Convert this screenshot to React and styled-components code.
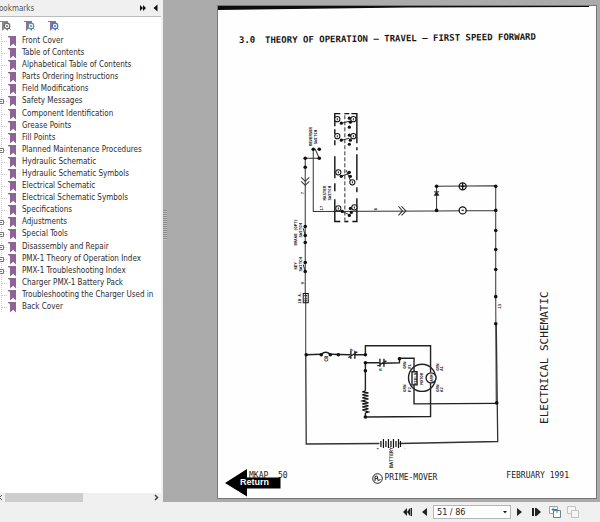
import React, { useState } from "react";
import styled, { createGlobalStyle } from "styled-components";

const GlobalStyle = createGlobalStyle`
    * {
        box-sizing: border-box;
    }

    body {
        margin: 0;
        background-color: #f0f0f0;
        font-family: "DejaVu Sans Condensed", "DejaVu Sans", sans-serif;
        font-size: 8px;
        color: #222;
    }

    button {
        display: flex;
        padding: 0;
        border: none;
        background: none;
        cursor: pointer;
    }

    svg {
        display: block;
    }
`;

const Window = styled.div`
    display: flex;
    flex-direction: column;
    min-height: 100vh;
    border-bottom: 1px solid #6d7275;
`;

const Main = styled.main`
    display: flex;
    flex: 1;
`;

const Sidebar = styled.aside`
    display: flex;
    flex-direction: column;
    width: 163px;
    flex-shrink: 0;
    overflow: hidden;
    background-color: #fff;
    border-right: 2px solid #f0f0f0;
`;

const SidebarHeader = styled.header`
    display: flex;
    align-items: center;
    gap: 7px;
    height: 17px;
    padding-right: 3px;
    background-color: #f0f0f0;
    border-bottom: 1px solid #bcbcbc;
`;

const SidebarTitle = styled.h2`
    flex: 1;
    margin: 0 0 0 -6px;
    font-size: 8px;
    font-weight: normal;
    color: #555;
`;

const SidebarTools = styled.div`
    display: flex;
    align-items: center;
    gap: 11px;
    height: 18px;
`;

const Tree = styled.ul`
    display: grid;
    grid-auto-rows: 1fr;
    height: 278px;
    margin: 0;
    padding: 0;
    list-style: none;
`;

const TreeRow = styled.li`
    display: flex;
    align-items: center;
    white-space: nowrap;
`;

const TreeLink = styled.a`
    display: flex;
    align-items: center;
    gap: 5px;
    line-height: 12px;
    color: #2c2c2c;
    text-decoration: none;
`;

const ScrollBar = styled.div`
    display: flex;
    align-items: center;
    justify-content: space-between;
    height: 9px;
    margin-top: auto;
    padding-right: 2px;
    background-color: #f0f0f0;
`;

const ScrollThumb = styled.div`
    width: 78px;
    height: 9px;
    margin-right: auto;
    margin-left: 2px;
    background-color: #cdcdcd;
`;

const Splitter = styled.div`
    display: flex;
    align-items: center;
    width: 5px;
    background-color: #ababab;
`;

const Grip = styled.div`
    width: 4px;
    height: 30px;
    margin-bottom: 52px;
    background: repeating-linear-gradient(#8d8d8d 0 1px, #bdbdbd 1px 2px);
`;

const Viewer = styled.section`
    flex: 1;
    min-width: 0;
    padding: 5px 3px 3px 49px;
    background-color: #ababab;
`;

const Page = styled.article`
    background-color: #fefefe;
    border: 1px solid #777;
    font-family: "DejaVu Sans Mono", monospace;
    color: #222;
`;

const PageTitle = styled.h1`
    display: flex;
    gap: 10px;
    margin: 0;
    padding: 22px 0 8px 21px;
    font-size: 9px;
    line-height: 16px;
    color: #161616;
    white-space: nowrap;

    span {
        transform: rotate(-0.7deg);
        transform-origin: left;
    }
`;

const PageFooter = styled.footer`
    position: relative;
    display: flex;
    justify-content: space-between;
    height: 29px;
    padding: 0 27px 0 31px;
    line-height: 14px;
    white-space: pre;
`;

const Brand = styled.div`
    display: flex;
    align-items: center;
    gap: 1px;
    height: 18px;
    margin-left: 16px;
`;

const ReturnLink = styled.a`
    position: absolute;
    left: 7px;
    top: 0;
    display: block;
    width: 56px;
`;

const NavBar = styled.nav`
    display: flex;
    align-items: center;
    justify-content: flex-end;
    height: 20px;
    padding-right: 19px;
    background-color: #f0f0f0;
`;

const NavButton = styled.button`
    justify-content: center;
    width: ${({ $width }) => $width || 17}px;
`;

const SelectBox = styled.label`
    display: flex;
    align-items: center;
    width: 78px;
    height: 14px;
    padding-right: 3px;
    border: 1px solid #b5b5b5;
    background-color: #fff;
`;

const PageSelect = styled.select`
    flex: 1;
    min-width: 0;
    padding: 0 3px;
    border: none;
    background: none;
    appearance: none;
    font-family: inherit;
    font-size: 9px;
    line-height: 12px;
    color: #222;
`;

const bookmarks = [
    { title: "Front Cover" },
    { title: "Table of Contents" },
    { title: "Alphabetical Table of Contents" },
    { title: "Parts Ordering Instructions" },
    { title: "Field Modifications" },
    { title: "Safety Messages", open: true },
    { title: "Component Identification" },
    { title: "Grease Points" },
    { title: "Fill Points" },
    { title: "Planned Maintenance Procedures", open: true },
    { title: "Hydraulic Schematic" },
    { title: "Hydraulic Schematic Symbols" },
    { title: "Electrical Schematic" },
    { title: "Electrical Schematic Symbols" },
    { title: "Specifications" },
    { title: "Adjustments", open: true },
    { title: "Special Tools", open: true },
    { title: "Disassembly and Repair", open: true },
    { title: "PMX-1 Theory of Operation Index", open: true },
    { title: "PMX-1 Troubleshooting Index", open: true },
    { title: "Charger PMX-1 Battery Pack" },
    { title: "Troubleshooting the Charger Used in" },
    { title: "Back Cover" },
];

const BookmarkIcon = ({ open }) => (
    <svg width="17" height="12" viewBox="0 0 17 12">
        <path d="M1.5 0V12M2 6.5H8" stroke="#c9c9c9" strokeDasharray="1 1" fill="none" />
        {open && <path d="M-1 4.5H3.5V8.5H-1M-1 6.5H2" stroke="#777" fill="#fff" />}
        <path d="M8 1H16V11.5L13.2 8.8L10 11.5V3.5Q10 2 8 2Z" fill="#8c6596" />
    </svg>
);

const ToolIcon = ({ flag, ring }) => (
    <svg width="13" height="12" viewBox="0 0 13 12">
        <path d="M0 1H8V11L5 8L2 11V2H0Z" fill={flag} />
        <circle cx="7" cy="6" r="2.8" fill="#eef5f5" stroke={ring} strokeWidth="1.2" />
        <path d="M7 5V7M6 6H8M9 8L10.5 9.5" stroke={ring} />
    </svg>
);

const Dots = ({ points, r = 1.8 }) =>
    points.map(([x, y]) => <circle key={x + "-" + y} cx={x} cy={y} r={r} fill="#111" />);

// text that reads from bottom to top
const Label = ({ x, y, size = 4, children }) => (
    <text transform={`translate(${x} ${y}) rotate(-90)`} fontSize={size} fontWeight="bold">
        {children}
    </text>
);

const Schematic = () => (
    <svg
        width="100%"
        viewBox="218 56 377 412"
        fill="none"
        stroke="#333"
        fontFamily="DejaVu Sans Mono, monospace"
        role="img"
        aria-label="Electrical schematic"
    >
        {/* left rail */}
        <path d="M305 158V293M305.5 302V353" />
        <path d="M305.5 353L306 443L379 442.5M399 442.5L497 440.5L495.5 323" strokeWidth="1.3" />
        <path d="M305 158H319L315 149H313V211L436 210.5" />
        <path d="M301 177L305 181L309 177M301 181L305 185L309 181" />
        <path d="M303 228L305 235M303 264L305 271" />
        <path d="M303 293H308V302H303ZM305.5 293V302" stroke="#111" />
        <path d="M304 295H307M304 298H307M304 300H307" />

        {/* master switch */}
        <path d="M344.5 115V220" strokeDasharray="4 2" />
        <path
            d="M334.5 126V113.5H340M344 113.5H349M351 113.5H356.5V143M334.5 129V134M334.5 140V145M334.5 156V178M334.5 183V191M334.5 199V221H340M344 221H348M352 221H356.5V198M356.5 192V187M356.5 180V154M356.5 150V147"
            stroke="#111"
            strokeWidth="1.4"
        />
        <path d="M341 123L349 121M341 140L349 138M341 176L349 173M342 211L350 215M346 170L350 180" />
        {[[337, 119], [353, 119], [337, 136], [353, 136], [338, 172], [352, 182], [338, 208], [354, 207]].map(([x, y]) => (
            <g key={x + "-" + y} stroke="#111">
                <circle cx={x} cy={y} r="2.6" fill="#fff" />
                <path d={`M${x} ${y - 1}V${y + 1}`} />
            </g>
        ))}

        {/* coil branch */}
        <path d="M398 206L402 210.5L398 215M401 206L405.5 210.5L401 215" />
        <path d="M436 210.5V186L495 185.5M436 210.5L495 210M495 185.5V296L495.5 402" />
        <path d="M434 195H438L436 191ZM433.5 191.5H438.5" fill="#111" />
        <g stroke="#111" strokeWidth="1.3">
            <circle cx="462" cy="186" r="3.5" />
            <path d="M460 186H464M462 183V189" />
            <circle cx="462" cy="210" r="3.5" fill="#fff" />
            <path d="M461 210H463" />
        </g>

        {/* motor circuit */}
        <g strokeWidth="1.4" stroke="#222">
            <path d="M306 354L321 353.5M330 353.5L350 354M354 354H365V345L430 345V372M430 382V415.5L365 416V412M365 390V362H379M383 362.5L399 362V357.5H413.5V371M413.5 384V403L496 402.5" />
            <path d="M321 353.5Q325.5 349.5 330 353.5M350.5 350V358M354.5 350V358M348 357L357 351M379.5 358V366M383.5 358V366M377 365L386 360" />
            <path d="M365 390L362 391L368 392L362 394L368 395L362 397L368 398L362 400L368 402L362 403L368 405L362 406L368 408L362 409L368 411L365 412" stroke="#111" />
            <circle cx="421.5" cy="377" r="13.5" />
            <circle cx="430.5" cy="377" r="5" fill="#fff" />
            <path d="M411.5 371H416.5V384H411.5Z" />
        </g>

        {/* battery */}
        <path
            d="M380.5 440V446M383 438V447M385.5 440V446M388 438V447M390.5 440V446M393 438V447M395.5 440V446M398 438V447M400 440V446"
            stroke="#111"
            strokeWidth="1.2"
        />

        <g stroke="none">
            <Dots
                points={[
                    [305, 158], [305, 167], [313, 149], [319, 149], [319, 158], [305, 226], [305, 235], [305, 242],
                    [305, 262], [305, 271], [306, 354], [321, 354], [330, 354], [338, 354], [365, 354], [365, 362],
                    [365, 370], [365, 416], [399, 358], [436, 186], [436, 210], [495, 186], [495, 210], [495, 230],
                    [495, 249], [495, 269], [495, 296], [495, 323], [496, 402],
                ]}
            />
            <Dots
                r={1.6}
                points={[
                    [341, 123], [349, 118], [350, 122], [349, 127], [341, 140], [349, 135], [350, 140], [349, 144],
                    [341, 176], [349, 172], [350, 176], [342, 211], [350, 208], [351, 212], [349, 215],
                ]}
            />
        </g>

        <g stroke="none" fill="#222">
            <Label x={312} y={146}>REVERSER</Label>
            <Label x={317} y={144}>SWITCH</Label>
            <Label x={326} y={200}>MASTER</Label>
            <Label x={331} y={200}>SWITCH</Label>
            <Label x={304} y={194}>7</Label>
            <Label x={323} y={210}>17</Label>
            <Label x={377} y={210}>8</Label>
            <Label x={297} y={245}>BRAKE (OPT)</Label>
            <Label x={302} y={237}>SWITCH</Label>
            <Label x={297} y={269}>KEY</Label>
            <Label x={302} y={271}>SWITCH</Label>
            <Label x={304} y={284}>9</Label>
            <Label x={301} y={303}>10 A.</Label>
            <Label x={500} y={308}>13</Label>
            <Label x={328} y={361} size={5}>CB</Label>
            <Label x={353} y={350}>F</Label>
            <Label x={382} y={370}>R</Label>
            <Label x={416} y={384}>FIELD</Label>
            <Label x={422} y={384}>MOTOR</Label>
            <Label x={432} y={381}>ARM</Label>
            <Label x={406} y={368}>GRN</Label>
            <Label x={410} y={368}>F1</Label>
            <Label x={406} y={391}>GRN</Label>
            <Label x={410} y={391}>F2</Label>
            <Label x={438} y={370}>GRN</Label>
            <Label x={442} y={370}>A1</Label>
            <Label x={438} y={391}>GRN</Label>
            <Label x={442} y={391}>A2</Label>
            <Label x={393} y={467} size={5}>BATTERY</Label>
            <text x="376" y="449" fontSize="4">+</text>
            <text x="403" y="449" fontSize="4">-</text>
            <text transform="translate(547 423) rotate(-90)" fontSize="11">
                ELECTRICAL SCHEMATIC
            </text>
        </g>
    </svg>
);

const App = () => {
    const [page, setPage] = useState(51);

    return (
        <Window>
            <GlobalStyle />
            <Main>
                <Sidebar>
                    <SidebarHeader>
                        <SidebarTitle>Bookmarks</SidebarTitle>
                        <button aria-label="Expand panel">
                            <svg width="6" height="6" viewBox="0 0 6 6">
                                <path d="M0 0L3 3L0 6ZM3 0L6 3L3 6Z" fill="#111" />
                            </svg>
                        </button>
                        <button aria-label="Collapse panel">
                            <svg width="5" height="8" viewBox="0 0 5 8">
                                <path d="M4.5 0.5V7.5L0.5 4Z" fill="#111" />
                            </svg>
                        </button>
                    </SidebarHeader>
                    <SidebarTools>
                        <button aria-label="Go to bookmark">
                            <ToolIcon flag="#8a8a8a" ring="#6c6c6c" />
                        </button>
                        <button aria-label="Add bookmark">
                            <ToolIcon flag="#946ba3" ring="#4c9a9b" />
                        </button>
                        <button aria-label="Bookmark settings">
                            <ToolIcon flag="#946ba3" ring="#4476c4" />
                        </button>
                    </SidebarTools>
                    <Tree>
                        {bookmarks.map((item) => (
                            <TreeRow key={item.title}>
                                <TreeLink href="#page">
                                    <BookmarkIcon open={item.open} />
                                    {item.title}
                                </TreeLink>
                            </TreeRow>
                        ))}
                    </Tree>
                    <ScrollBar>
                        <svg width="3" height="7" viewBox="0 0 3 7">
                            <path d="M2 1L-0.5 3.5L2 6" stroke="#555" fill="none" />
                        </svg>
                        <ScrollThumb />
                        <svg width="5" height="7" viewBox="0 0 5 7">
                            <path d="M1 1L3.5 3.5L1 6" stroke="#444" strokeWidth="1.5" fill="none" />
                        </svg>
                    </ScrollBar>
                </Sidebar>
                <Splitter>
                    <Grip />
                </Splitter>
                <Viewer>
                    <Page id="page">
                        <svg width="100%" height="4" viewBox="0 0 377 4" preserveAspectRatio="none">
                            <path d="M0 0H370V1L190 1.5L0 4Z" fill="#0c0c0c" />
                        </svg>
                        <PageTitle>
                            <span>3.0</span>
                            <span>THEORY OF OPERATION – TRAVEL – FIRST SPEED FORWARD</span>
                        </PageTitle>
                        <Schematic />
                        <PageFooter>
                            <span>MKAP  50</span>
                            <Brand>
                                <svg width="11" height="11" viewBox="0 0 11 11">
                                    <circle cx="5.5" cy="5.5" r="4.8" fill="none" stroke="#222" />
                                    <path d="M3 8V3.5Q6 2 5.5 5L3 6M5.5 5L6 7.5L8.5 6.5" fill="none" stroke="#222" />
                                </svg>
                                PRIME-MOVER
                            </Brand>
                            <span>FEBRUARY 1991</span>
                            <ReturnLink href="#page">
                                <svg width="56" height="28" viewBox="0 0 56 28">
                                    <path d="M0 14L22 0V8.5H55.5V19.5H22V27.5Z" fill="#000" />
                                    <text
                                        x="15"
                                        y="16"
                                        fill="#fff"
                                        fontFamily="Liberation Sans, sans-serif"
                                        fontSize="9"
                                        fontWeight="bold"
                                    >
                                        Return
                                    </text>
                                </svg>
                            </ReturnLink>
                        </PageFooter>
                    </Page>
                </Viewer>
            </Main>
            <NavBar>
                <NavButton aria-label="First page">
                    <svg width="9" height="8" viewBox="0 0 9 8">
                        <path d="M4 0V8L0 4ZM7 0V8L4 4ZM7.5 0H9V8H7.5Z" fill="#222" />
                    </svg>
                </NavButton>
                <NavButton aria-label="Previous page">
                    <svg width="5" height="8" viewBox="0 0 5 8">
                        <path d="M5 0V8L0 4Z" fill="#222" />
                    </svg>
                </NavButton>
                <SelectBox>
                    <PageSelect
                        aria-label="Page"
                        value={page}
                        onChange={(e) => setPage(Number(e.target.value))}
                    >
                        {Array.from({ length: 86 }, (_, i) => (
                            <option key={i} value={i + 1}>
                                {i + 1} / 86
                            </option>
                        ))}
                    </PageSelect>
                    <svg width="4" height="3" viewBox="0 0 4 3">
                        <path d="M0 0H4L2 2.5Z" fill="#222" />
                    </svg>
                </SelectBox>
                <NavButton aria-label="Next page">
                    <svg width="5" height="8" viewBox="0 0 5 8">
                        <path d="M0 0V8L5 4Z" fill="#222" />
                    </svg>
                </NavButton>
                <NavButton aria-label="Last page">
                    <svg width="9" height="8" viewBox="0 0 9 8">
                        <path d="M0 0H2V8H0ZM3 0H4.5L9 4L4.5 8H3Z" fill="#222" />
                    </svg>
                </NavButton>
                <NavButton aria-label="Previous view" $width={19}>
                    <svg width="12" height="12" viewBox="0 0 12 12" fill="none">
                        <path d="M0.5 0.5H8.5V7.5H0.5Z" stroke="#9aa4ad" fill="#fff" />
                        <path d="M4.5 4.5H11.5V11.5H4.5Z" stroke="#70808c" fill="#fff" />
                        <path d="M8 7V3.5H3M5 1.5L3 3.5L5 5.5" stroke="#278c91" />
                    </svg>
                </NavButton>
                <NavButton aria-label="Next view">
                    <svg width="12" height="12" viewBox="0 0 12 12" fill="none" stroke="#bfc3c6">
                        <path d="M0.5 0.5H8.5V7.5H0.5Z" fill="#f5f5f5" />
                        <path d="M4.5 4.5H11.5V11.5H4.5Z" fill="#f5f5f5" />
                    </svg>
                </NavButton>
            </NavBar>
        </Window>
    );
};

export default App;
